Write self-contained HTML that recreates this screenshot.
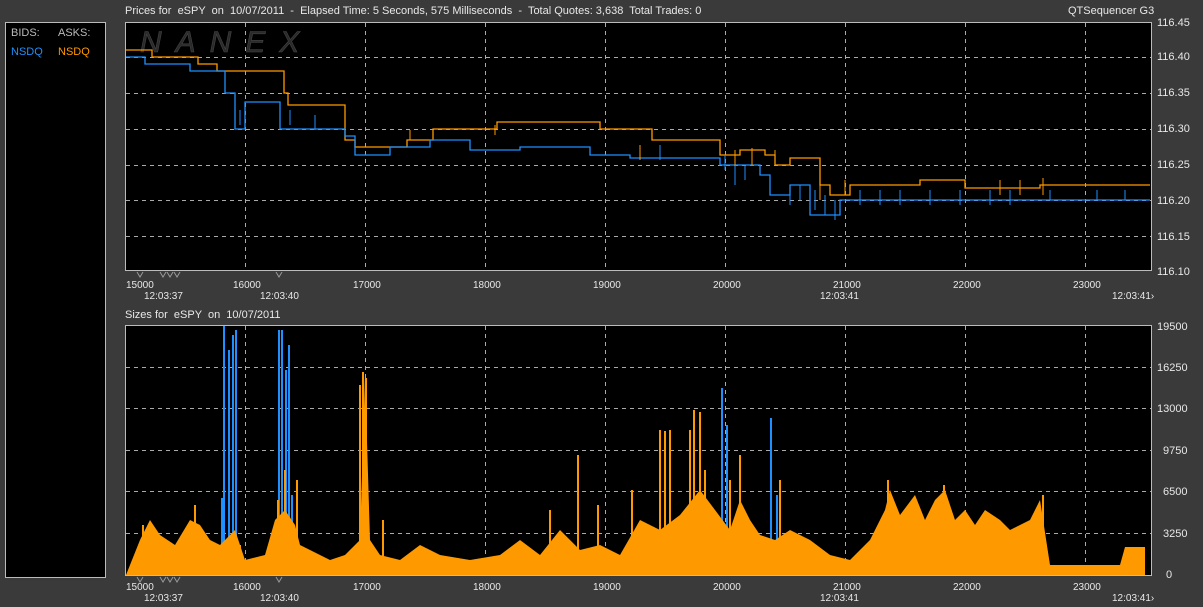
<!DOCTYPE html>
<html><head><meta charset="utf-8"><style>
body{margin:0;width:1203px;height:607px;background:#3a3a3a;overflow:hidden;font-family:"Liberation Sans",sans-serif;}
svg{position:absolute;left:0;top:0}
text{font-family:"Liberation Sans",sans-serif;font-size:11px;fill:#e8e8e8;white-space:pre}
</style></head><body>
<svg width="1203" height="607" xmlns="http://www.w3.org/2000/svg" xml:space="preserve">
<rect x="0" y="0" width="1203" height="607" fill="#3a3a3a"/>
<rect x="5.5" y="22.5" width="100" height="555" fill="#000" stroke="#bbb"/>
<text x="11" y="36" style="fill:#bbb">BIDS:</text>
<text x="58" y="36" style="fill:#bbb">ASKS:</text>
<text x="11" y="55" style="fill:#1e90ff">NSDQ</text>
<text x="58" y="55" style="fill:#ff9900">NSDQ</text>
<text x="125" y="14">Prices for  eSPY  on  10/07/2011  -  Elapsed Time: 5 Seconds, 575 Milliseconds  -  Total Quotes: 3,638  Total Trades: 0</text>
<text x="1068" y="14">QTSequencer G3</text>
<text x="125" y="318">Sizes for  eSPY  on  10/07/2011</text>
<rect x="125.5" y="22.5" width="1026" height="248" fill="#000" stroke="#bbb"/>
<text x="140" y="52" style="font-size:30px;font-style:italic;letter-spacing:14px;fill:#2a2a2a;stroke:#444;stroke-width:0.6">NANEX</text>
<g stroke="#aaa" stroke-dasharray="4,4" stroke-width="1">
<path d="M245.5 23V270M365.5 23V270M485.5 23V270M605.5 23V270M725.5 23V270M845.5 23V270M965.5 23V270M1085.5 23V270"/>
<path d="M126 57.5H1151M126 93.5H1151M126 129.5H1151M126 165.5H1151M126 200.5H1151M126 236.5H1151"/>
</g>
<path fill="none" stroke="#ff9900" stroke-width="1.3" d="M126,50 H152 V57 H198 V64 H217 V71 H284 V93 H288 V105 H345 V140 H355 V147 H407 V140 H433 V129 H497 V122 H600 V129 H652 V140 H720 V155 H740 V150 H765 V155 H775 V165 H790 V158 H820 V185 H830 V195 H850 V185 H920 V180 H965 V188 H1040 V185 H1150"/>
<path fill="none" stroke="#1e90ff" stroke-width="1.3" d="M126,57 H145 V64 H190 V71 H225 V93 H235 V129 H245 V102 H280 V129 H345 V136 H355 V155 H390 V147 H430 V140 H470 V150 H520 V147 H590 V155 H630 V158 H720 V165 H760 V175 H770 V195 H790 V185 H810 V215 H840 V200 H1150"/>
<g stroke="#1e90ff" stroke-width="1"><path d="M735 165V185M745 165V180M790 185V205M800 185V200M815 190V210M825 195V215M835 200V220M860 190V205M880 190V205M900 190V205M930 190V205M960 190V205M990 190V205M1010 190V205M1050 190V200M1097 190V200M1125 190V200M240 110V125M290 110V125M315 115V130M660 145V160M725 155V170"/></g>
<g stroke="#ff9900" stroke-width="1"><path d="M735 150V165M752 148V165M775 150V165M820 180V200M845 180V195M1000 180V195M1020 180V195M1043 178V195M410 130V140M495 125V135M640 145V160"/></g>
<g fill="none" stroke="#999" stroke-width="1"><path d="M137 272l3 5 3-5M160 272l3 5 3-5M167 272l3 5 3-5M174 272l3 5 3-5M276 272l3 5 3-5"/></g>
<g>
<text x="1157" y="26">116.45</text><text x="1157" y="60">116.40</text><text x="1157" y="96">116.35</text><text x="1157" y="132">116.30</text><text x="1157" y="168">116.25</text><text x="1157" y="204">116.20</text><text x="1157" y="240">116.15</text><text x="1157" y="275">116.10</text>
</g>
<g style="font-size:10px">
<text x="126" y="288" style="font-size:10px">15000</text><text x="233" y="288" style="font-size:10px">16000</text><text x="353" y="288" style="font-size:10px">17000</text><text x="473" y="288" style="font-size:10px">18000</text><text x="593" y="288" style="font-size:10px">19000</text><text x="713" y="288" style="font-size:10px">20000</text><text x="833" y="288" style="font-size:10px">21000</text><text x="953" y="288" style="font-size:10px">22000</text><text x="1073" y="288" style="font-size:10px">23000</text>
<text x="144" y="299" style="font-size:10px">12:03:37</text><text x="260" y="299" style="font-size:10px">12:03:40</text><text x="820" y="299" style="font-size:10px">12:03:41</text><text x="1112" y="299" style="font-size:10px">12:03:41›</text>
</g>
<rect x="125.5" y="325.5" width="1026" height="250" fill="#000" stroke="#bbb"/>
<g stroke="#aaa" stroke-dasharray="4,4" stroke-width="1">
<path d="M245.5 326V575M365.5 326V575M485.5 326V575M605.5 326V575M725.5 326V575M845.5 326V575M965.5 326V575M1085.5 326V575"/>
<path d="M126 367.5H1151M126 408.5H1151M126 450.5H1151M126 491.5H1151M126 533.5H1151"/>
</g>
<g stroke="#1e90ff" stroke-width="2"><path d="M222 575V498M224 575V326M229 575V350M233 575V335M236 575V330M279 575V330M282 575V330M286 575V370M289 575V345M292 575V495M722 575V388M727 575V425M771 575V418M777 575V495M820 575V565M975 575V555M1020 575V560"/></g>
<polygon fill="#ff9900" points="126,575 140,540 150,520 160,535 175,545 190,520 200,525 210,540 220,545 235,530 245,560 265,555 275,520 285,510 295,525 300,545 330,560 345,555 360,540 365,375 370,540 380,555 400,560 420,545 440,555 470,560 500,555 520,540 540,555 560,530 580,550 600,545 620,555 640,520 660,530 680,515 700,490 715,510 730,530 740,500 750,520 760,535 775,540 790,530 810,540 830,555 850,560 870,540 885,510 890,490 900,515 915,495 925,520 935,500 945,490 955,520 965,510 975,525 985,510 1000,520 1010,530 1030,520 1040,500 1050,565 1120,565 1125,547 1145,547 1145,575"/>
<g stroke="#ff9900" stroke-width="2"><path d="M143 575V525M150 575V532M195 575V505M240 575V545M278 575V500M285 575V470M297 575V480M360 575V385M363 575V372M366 575V378M383 575V520M550 575V510M578 575V455M598 575V505M632 575V490M660 575V430M665 575V431M670 575V430M690 575V430M694 575V410M700 575V412M705 575V470M730 575V480M740 575V455M780 575V480M888 575V480M944 575V485M1043 575V495"/></g>
<g fill="none" stroke="#999" stroke-width="1"><path d="M137 577l3 5 3-5M160 577l3 5 3-5M167 577l3 5 3-5M174 577l3 5 3-5M276 577l3 5 3-5"/></g>
<g>
<text x="1157" y="330">19500</text><text x="1157" y="371">16250</text><text x="1157" y="412">13000</text><text x="1163" y="454">9750</text><text x="1163" y="495">6500</text><text x="1163" y="537">3250</text><text x="1166" y="578">0</text>
</g>
<g>
<text x="126" y="590" style="font-size:10px">15000</text><text x="233" y="590" style="font-size:10px">16000</text><text x="353" y="590" style="font-size:10px">17000</text><text x="473" y="590" style="font-size:10px">18000</text><text x="593" y="590" style="font-size:10px">19000</text><text x="713" y="590" style="font-size:10px">20000</text><text x="833" y="590" style="font-size:10px">21000</text><text x="953" y="590" style="font-size:10px">22000</text><text x="1073" y="590" style="font-size:10px">23000</text>
<text x="144" y="601" style="font-size:10px">12:03:37</text><text x="260" y="601" style="font-size:10px">12:03:40</text><text x="820" y="601" style="font-size:10px">12:03:41</text><text x="1112" y="601" style="font-size:10px">12:03:41›</text>
</g>
</svg>
</body></html>
